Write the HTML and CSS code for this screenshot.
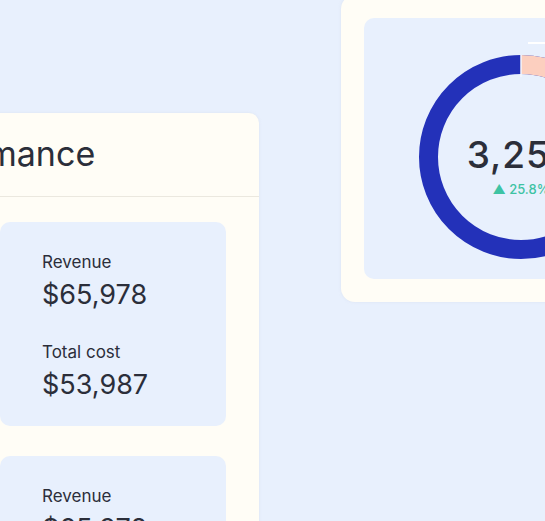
FILE: index.html
```html
<!DOCTYPE html>
<html lang="en">
<head>
    <meta charset="UTF-8">
    <meta name="viewport" content="width=device-width, initial-scale=1.0">
    <title>Performance</title>
    <link rel="stylesheet" href="styles.css">
</head>
<body>
    <div class="page">
        <div class="card performance">
            <div class="card-header">
                <h2 class="card-title">Performance</h2>
            </div>
            <div class="stat-list">
                <div class="stat-box">
                    <div class="stat-label">Revenue</div>
                    <div class="stat-value">$65,978</div>
                    <div class="stat-label second">Total cost</div>
                    <div class="stat-value">$53,987</div>
                </div>
                <div class="stat-box">
                    <div class="stat-label">Revenue</div>
                    <div class="stat-value">$65,978</div>
                    <div class="stat-label second">Total cost</div>
                    <div class="stat-value">$53,987</div>
                </div>
            </div>
        </div>

        <div class="card summary">
            <div class="chart-panel">
                <span class="leader"></span>
                <div class="donut">
                    <svg width="204" height="204" viewBox="0 0 204 204">
                        <circle cx="102" cy="102" r="92.5" fill="none" stroke="#2331b9" stroke-width="19"/>
                        <circle cx="102" cy="102" r="92.5" fill="none" stroke="#fccfbf" stroke-width="19"
                                stroke-dasharray="145 436" transform="rotate(-90 102 102)"/>
                        <line x1="102" y1="0" x2="102" y2="22" stroke="#f4f6fd" stroke-width="1.5"/>
                    </svg>
                    <div class="donut-center">
                        <div class="donut-value">3,254</div>
                        <div class="donut-change">&#9650; 25.8%</div>
                    </div>
                </div>
            </div>
        </div>
    </div>
</body>
</html>
```

FILE: styles.css
```css
body {
    margin: 0;
    background-color: #e8f0fd;
    font-family: Inter, "Noto Sans", sans-serif;
    color: #2b2e3a;
    overflow: hidden;
    height: 521px;
}
.page {
    display: flex;
    align-items: flex-start;
    margin-left: -33px;
}
.card {
    flex-shrink: 0;
    background-color: #fffdf6;
    box-shadow: 0 0 3px rgba(200, 205, 220, 0.35);
}
.performance {
    width: 226px;
    padding: 0 33px;
    margin-top: 113px;
    border-radius: 10px;
    height: 600px;
}
.card-header {
    margin: 0 -33px;
    padding: 21px 33px 22px;
    border-bottom: 1px solid #ebe8df;
}
.card-title {
    margin: 0 0 0 -113px;
    font-size: 34px;
    line-height: 40px;
    font-weight: 400;
    white-space: nowrap;
}
.stat-list {
    display: flex;
    flex-direction: column;
    gap: 30px;
    padding-top: 25px;
}
.stat-box {
    background-color: #e8f0fd;
    border-radius: 10px;
    height: 204px;
    box-sizing: border-box;
    padding: 28px 42px 0;
}
.stat-label {
    font-size: 17px;
    line-height: 24px;
}
.stat-label.second {
    margin-top: 29px;
}
.stat-value {
    font-size: 27px;
    line-height: 32px;
    margin-top: 5px;
}
.summary {
    margin-left: 82px;
    margin-top: -5px;
    padding: 23px;
    width: 260px;
    border-radius: 14px;
}
.chart-panel {
    position: relative;
    background-color: #e8f0fd;
    border-radius: 10px;
    height: 261px;
    box-sizing: border-box;
    padding: 37px 0 0 55px;
}
.leader {
    position: absolute;
    left: 164px;
    top: 24px;
    width: 60px;
    height: 2px;
    background-color: #ffffff;
}
.donut {
    position: relative;
    width: 204px;
    height: 204px;
}
.donut svg {
    display: block;
}
.donut-center {
    position: absolute;
    left: 0;
    right: 0;
    top: 78px;
    text-align: center;
}
.donut-value {
    font-size: 37px;
    line-height: 44px;
    font-weight: 500;
    letter-spacing: 1px;
}
.donut-change {
    margin-top: 4px;
    font-size: 13px;
    line-height: 16px;
    color: #3ec3a4;
    font-weight: 500;
}
```
